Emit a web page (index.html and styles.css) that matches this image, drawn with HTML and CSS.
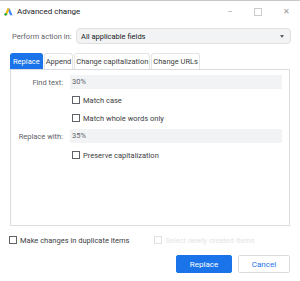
FILE: index.html
```html
<!DOCTYPE html>
<html lang="en">
<head>
    <meta charset="UTF-8">
    <title>Advanced change</title>
    <link rel="stylesheet" href="styles.css">
</head>
<body>
    <div class="window">
        <div class="titlebar">
            <svg class="logo" width="9" height="8" viewBox="0 0 9 8">
                <path d="M3.2 0.6 L5.6 0.6 L8.6 7.2 L6.2 7.2 Z" fill="#4285f4"/>
                <path d="M3.2 0.6 L5.6 0.6 L2.8 7.2 L0.6 7.2 Z" fill="#fbbc04"/>
                <circle cx="1.7" cy="6.3" r="1.4" fill="#34a853"/>
            </svg>
            <span class="title">Advanced change</span>
            <div class="controls">
                <span class="ctl">&#8211;</span>
                <span class="ctl max"></span>
                <span class="ctl">&#10005;</span>
            </div>
        </div>

        <div class="action">
            <span class="label">Perform action in:</span>
            <div class="select">
                <span>All applicable fields</span>
                <span class="arrow"></span>
            </div>
        </div>

        <div class="tabs">
            <div class="tab active">Replace</div>
            <div class="tab">Append</div>
            <div class="tab">Change capitalization</div>
            <div class="tab">Change URLs</div>
        </div>

        <div class="panel">
            <div class="row">
                <span class="flabel">Find text:</span>
                <div class="input">30%</div>
            </div>
            <div class="row">
                <span class="flabel"></span>
                <label class="cb"><span class="box"></span>Match case</label>
            </div>
            <div class="row">
                <span class="flabel"></span>
                <label class="cb"><span class="box"></span>Match whole words only</label>
            </div>
            <div class="row">
                <span class="flabel">Replace with:</span>
                <div class="input">35%</div>
            </div>
            <div class="row last">
                <span class="flabel"></span>
                <label class="cb"><span class="box"></span>Preserve capitalization</label>
            </div>
        </div>

        <div class="options">
            <label class="cb"><span class="box"></span>Make changes in duplicate items</label>
            <label class="cb disabled"><span class="box"></span>Select newly created items</label>
        </div>

        <div class="buttons">
            <button class="btn primary">Replace</button>
            <button class="btn">Cancel</button>
        </div>
    </div>
</body>
</html>
```

FILE: styles.css
```css
body {
    margin: 0;
    background: #ffffff;
    font-family: Roboto, "Liberation Sans", sans-serif;
    font-size: 7.5px;
    color: #3c4043;
    white-space: nowrap;
}

.window {
    width: 300px;
    height: 281px;
    border-top: 1px solid #c8c8c8;
    box-sizing: border-box;
}

.titlebar {
    display: flex;
    align-items: center;
    height: 21px;
    padding-left: 4px;
}
.logo {
    margin-right: 4px;
}
.title {
    font-size: 8px;
    color: #202124;
}
.controls {
    margin-left: auto;
    display: flex;
}
.ctl {
    width: 28px;
    text-align: center;
    color: #999;
    font-size: 8px;
}
.ctl.max {
    display: flex;
    justify-content: center;
    align-items: center;
}
.ctl.max::before {
    content: "";
    width: 6px;
    height: 6px;
    border: 1px solid #ccc;
}

.action {
    display: flex;
    align-items: center;
    margin: 6px 9px 0 12px;
}
.label {
    width: 64px;
    color: #5f6368;
}
.select {
    flex: 1;
    display: flex;
    align-items: center;
    height: 14px;
    padding: 0 6px 0 4px;
    background: #f1f3f4;
    border: 1px solid #e0e0e0;
    border-radius: 4px;
    color: #202124;
}
.arrow {
    margin-left: auto;
    width: 0;
    height: 0;
    border-left: 2.5px solid transparent;
    border-right: 2.5px solid transparent;
    border-top: 3px solid #5f6368;
}

.tabs {
    display: flex;
    margin: 9px 0 0 10px;
    gap: 1px;
}
.tab {
    height: 16px;
    line-height: 15px;
    padding: 0 1px;
    border: 1px solid #e4e4e4;
    border-bottom: none;
    border-radius: 3px 3px 0 0;
    color: #3c4043;
    box-sizing: border-box;
}
.tab.active {
    background: #1a73e8;
    border-color: #1a73e8;
    color: #ffffff;
    padding: 0 2px;
}

.panel {
    margin: 0 10px 0 10px;
    height: 157px;
    border: 1px solid #dadce0;
    box-sizing: border-box;
    padding-top: 3px;
}
.row {
    display: flex;
    align-items: center;
    height: 18px;
    margin-right: 7px;
}
.row.last {
    margin-top: 1px;
}
.flabel {
    width: 52px;
    text-align: right;
    margin-right: 7px;
    color: #5f6368;
    flex-shrink: 0;
}
.input {
    flex: 1;
    height: 14px;
    line-height: 14px;
    padding-left: 2px;
    background: #f1f3f4;
    color: #5f6368;
}

.cb {
    display: flex;
    align-items: center;
    color: #3c4043;
}
.row .cb {
    margin-left: 2px;
}
.box {
    width: 6px;
    height: 6px;
    border: 1px solid #5f6368;
    margin-right: 3px;
    background: #fff;
}
.cb.disabled {
    color: #e4e4e4;
}
.cb.disabled .box {
    border-color: #e0e0e0;
}

.options {
    display: flex;
    align-items: center;
    margin: 9px 0 0 9px;
    height: 10px;
}
.options .cb.disabled {
    margin-left: 25px;
}

.buttons {
    display: flex;
    justify-content: flex-end;
    gap: 6px;
    margin: 10px 10px 0 0;
}
.btn {
    font-family: Roboto, "Liberation Sans", sans-serif;
    font-size: 8px;
    height: 18px;
    border-radius: 2px;
    border: 1px solid #dadce0;
    background: #fff;
    color: #1a73e8;
    width: 52px;
    padding: 0;
}
.btn.primary {
    width: 56px;
    background: #1a73e8;
    border-color: #1a73e8;
    color: #fff;
}
```
